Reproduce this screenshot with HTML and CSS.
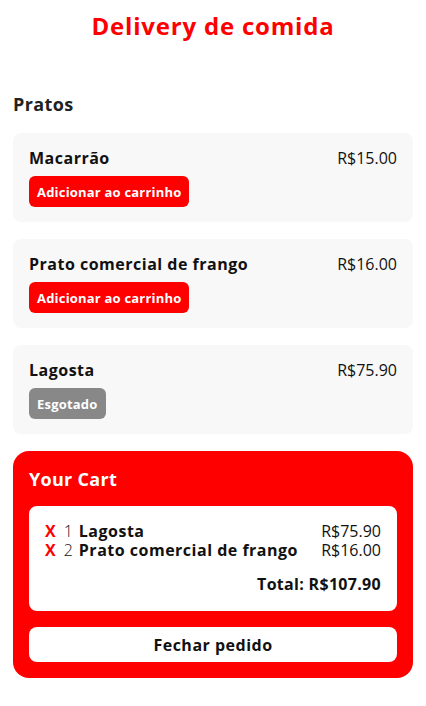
FILE: index.html
```html
<!DOCTYPE html>
<html lang="pt-BR">
<head>
<meta charset="utf-8">
<title>Delivery de comida</title>
<link rel="stylesheet" href="styles.css">
</head>
<body>
<main class="app">
  <h1 class="title">Delivery de comida</h1>
  <h2 class="section-title">Pratos</h2>
  <div class="list">
    <div class="card">
      <div class="card-row">
        <span class="name">Macarrão</span>
        <span class="price">R$15.00</span>
      </div>
      <button class="btn btn-add">Adicionar ao carrinho</button>
    </div>
    <div class="card">
      <div class="card-row">
        <span class="name">Prato comercial de frango</span>
        <span class="price">R$16.00</span>
      </div>
      <button class="btn btn-add">Adicionar ao carrinho</button>
    </div>
    <div class="card">
      <div class="card-row">
        <span class="name">Lagosta</span>
        <span class="price">R$75.90</span>
      </div>
      <button class="btn btn-out">Esgotado</button>
    </div>
  </div>
  <section class="cart">
    <h2 class="cart-title">Your Cart</h2>
    <div class="cart-box">
      <div class="cart-item">
        <span class="remove">X</span><span class="qty">1</span><span class="item-name">Lagosta</span>
        <span class="item-price">R$75.90</span>
      </div>
      <div class="cart-item">
        <span class="remove">X</span><span class="qty">2</span><span class="item-name">Prato comercial de frango</span>
        <span class="item-price">R$16.00</span>
      </div>
      <div class="total">Total: R$107.90</div>
    </div>
    <button class="checkout">Fechar pedido</button>
  </section>
</main>
</body>
</html>
```
FILE: styles.css
```css
* { box-sizing: border-box; }
body {
  margin: 0;
  font-family: "Open Sans", "Liberation Sans", sans-serif;
  color: #111;
  background: #fff;
}
.app { padding: 0 13px; }
.title {
  margin: 0;
  padding-top: 10px;
  text-align: center;
  color: #ff0000;
  font-size: 24px;
  font-weight: 700;
  line-height: 32px;
  letter-spacing: 0.8px;
}
.section-title {
  margin: 50px 0 0;
  font-size: 18px;
  line-height: 24px;
  font-weight: 700;
  color: #222;
  letter-spacing: 0.4px;
}
.list {
  display: flex;
  flex-direction: column;
  gap: 17px;
  margin-top: 17px;
}
.card {
  background: #f8f8f8;
  border-radius: 8px;
  padding: 14px 16px 15px;
  height: 89px;
}
.card-row {
  display: flex;
  justify-content: space-between;
  align-items: center;
  line-height: 22px;
}
.name { font-weight: 700; font-size: 16px; letter-spacing: 0.5px; }
.price { font-weight: 400; font-size: 16px; }
.btn {
  display: block;
  margin-top: 7px;
  border: 0;
  border-radius: 6px;
  color: #fff;
  font-family: inherit;
  font-size: 13px;
  font-weight: 700;
  letter-spacing: 0.2px;
  height: 31px;
  padding: 0 8px;
}
.btn-add { background: #ff0000; }
.btn-out { background: #888; }
.cart {
  margin-top: 17px;
  margin-bottom: 28px;
  background: #ff0000;
  border-radius: 16px;
  padding: 16px 16px 16px;
}
.cart-title {
  margin: 0;
  color: #fff;
  font-size: 18px;
  line-height: 24px;
  font-weight: 700;
  letter-spacing: 0.3px;
}
.cart-box {
  margin-top: 15px;
  background: #fff;
  border-radius: 8px;
  padding: 16px 16px 17px;
}
.cart-item {
  display: flex;
  align-items: baseline;
  font-size: 16px;
  line-height: 19px;
}
.remove { color: #ff0000; font-weight: 700; margin-right: 8px; }
.qty { margin-right: 6px; font-weight: 300; }
.item-name { font-weight: 700; letter-spacing: 0.5px; }
.item-price { margin-left: auto; font-weight: 400; }
.total {
  margin-top: 14px;
  text-align: right;
  font-weight: 700;
  font-size: 16px;
  line-height: 20px;
  letter-spacing: 0.3px;
}
.checkout {
  display: block;
  width: 100%;
  margin-top: 16px;
  height: 35px;
  border: 0;
  border-radius: 8px;
  background: #fff;
  color: #111;
  font-family: inherit;
  font-size: 16px;
  font-weight: 700;
  letter-spacing: 0.5px;
}
```
